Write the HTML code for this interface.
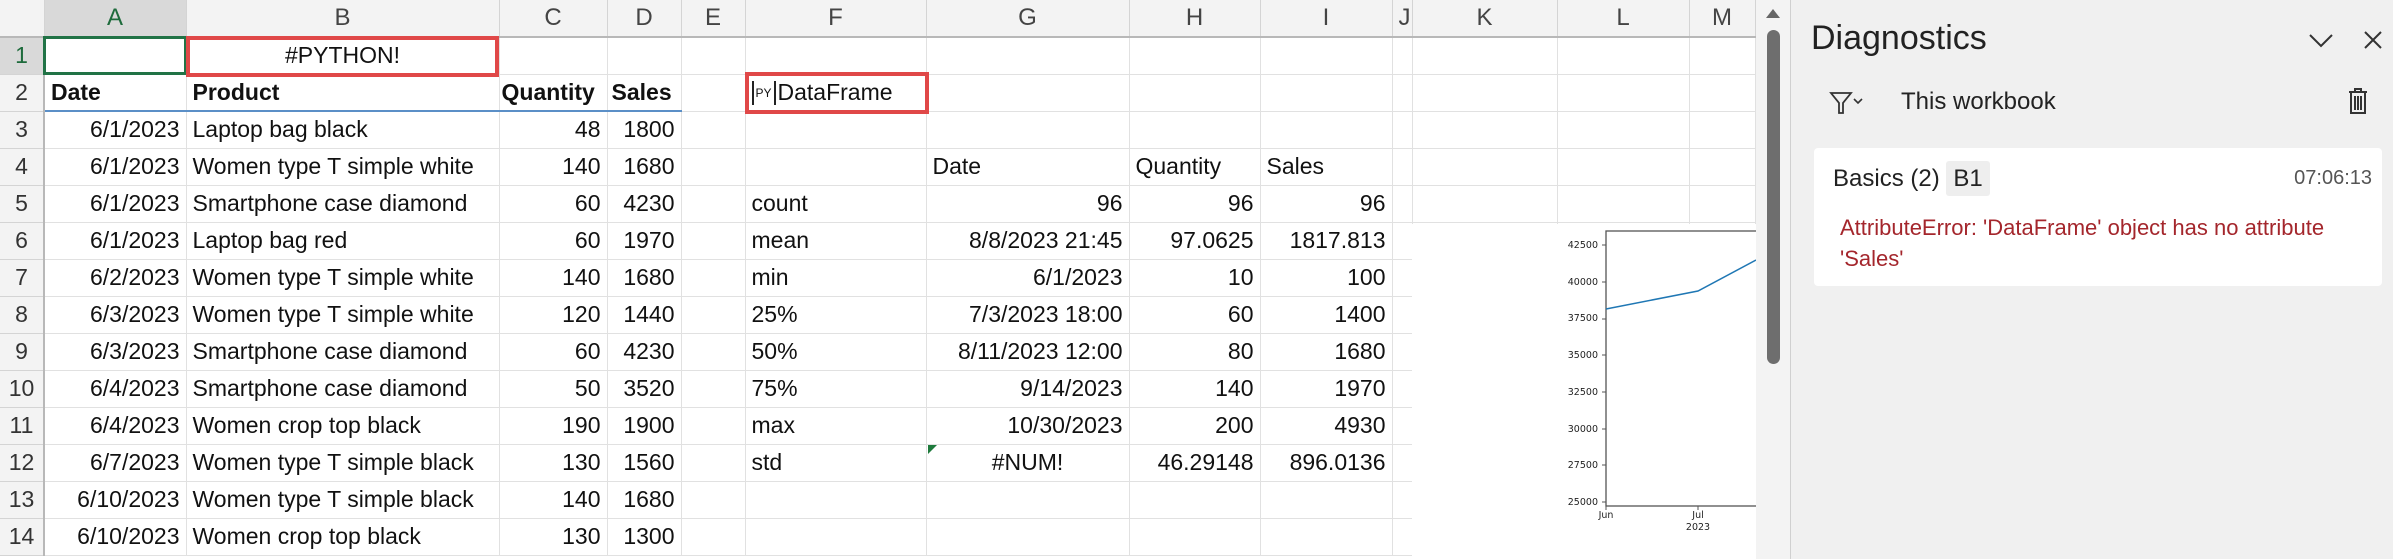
<!DOCTYPE html>
<html><head><meta charset="utf-8"><style>
*{margin:0;padding:0;box-sizing:border-box}
body{width:2393px;height:559px;overflow:hidden;background:#fff;font-family:"Liberation Sans",sans-serif;position:relative}
table{position:absolute;left:0;top:0;border-collapse:collapse;table-layout:fixed;width:1755px}
td,th{height:37px;border-right:1px solid #e1e1e1;border-bottom:1px solid #e1e1e1;font-size:23px;color:#111;white-space:nowrap;overflow:visible;padding:0 6px;font-weight:normal}
thead th{background:#f3f3f3;color:#444;font-size:24px;text-align:center;border-bottom:2px solid #b8b8b8;border-right:1px solid #d4d4d4}
tbody th{background:#f3f3f3;color:#333;text-align:center;padding:0;border-right:2px solid #b8b8b8;border-bottom:1px solid #d4d4d4}
.r{text-align:right}
.b{font-weight:bold}
.bl td{border-bottom:2px solid #5b8fc7}
.box{position:absolute;border:4px solid #e04848}
.panel{position:absolute;left:1790px;top:0;width:603px;height:559px;background:#f0f0f0;border-left:1px solid #d0d0d0}
</style></head><body>
<table>
<colgroup><col style="width:44px"><col style="width:142px"><col style="width:313px"><col style="width:108px"><col style="width:74px"><col style="width:64px"><col style="width:181px"><col style="width:203px"><col style="width:131px"><col style="width:132px"><col style="width:20px"><col style="width:145px"><col style="width:132px"><col style="width:66px"></colgroup>
<thead><tr><th></th><th style="background:#d9d9d9;color:#1e6b3c;border-bottom:3px solid #217346">A</th><th>B</th><th>C</th><th>D</th><th>E</th><th>F</th><th>G</th><th>H</th><th>I</th><th>J</th><th>K</th><th>L</th><th>M</th></tr></thead>
<tbody>
<tr><th style="background:#d9d9d9;color:#1e6b3c">1</th><td style="outline:3px solid #217346;outline-offset:-2px"></td><td style="text-align:center">#PYTHON!</td><td></td><td></td><td></td><td></td><td></td><td></td><td></td><td></td><td></td><td></td><td></td></tr>
<tr class="bl"><th>2</th><td class="b">Date</td><td class="b">Product</td><td class="b" style="padding:0 2px">Quantity</td><td class="b" style="padding:0 4px">Sales</td><td style="border-bottom:1px solid #e1e1e1"></td><td style="border-bottom:1px solid #e1e1e1"><div style="display:flex;align-items:center;height:36px"><span style="display:inline-block;font-size:12px;border:2px solid #222;border-top:0;border-bottom:0;padding:0 2px;height:24px;line-height:24px;margin-right:2px">PY</span><span>DataFrame</span></div></td><td style="border-bottom:1px solid #e1e1e1"></td><td style="border-bottom:1px solid #e1e1e1"></td><td style="border-bottom:1px solid #e1e1e1"></td><td style="border-bottom:1px solid #e1e1e1"></td><td style="border-bottom:1px solid #e1e1e1"></td><td style="border-bottom:1px solid #e1e1e1"></td><td style="border-bottom:1px solid #e1e1e1"></td></tr>
<tr><th>3</th><td class="r">6/1/2023</td><td>Laptop bag black</td><td class="r">48</td><td class="r">1800</td><td></td><td></td><td></td><td></td><td></td><td></td><td></td><td></td><td></td></tr>
<tr><th>4</th><td class="r">6/1/2023</td><td>Women type T simple white</td><td class="r">140</td><td class="r">1680</td><td></td><td></td><td>Date</td><td>Quantity</td><td>Sales</td><td></td><td></td><td></td><td></td></tr>
<tr><th>5</th><td class="r">6/1/2023</td><td>Smartphone case diamond</td><td class="r">60</td><td class="r">4230</td><td></td><td>count</td><td class="r">96</td><td class="r">96</td><td class="r">96</td><td></td><td></td><td></td><td></td></tr>
<tr><th>6</th><td class="r">6/1/2023</td><td>Laptop bag red</td><td class="r">60</td><td class="r">1970</td><td></td><td>mean</td><td class="r">8/8/2023 21:45</td><td class="r">97.0625</td><td class="r">1817.813</td><td></td><td></td><td></td><td></td></tr>
<tr><th>7</th><td class="r">6/2/2023</td><td>Women type T simple white</td><td class="r">140</td><td class="r">1680</td><td></td><td>min</td><td class="r">6/1/2023</td><td class="r">10</td><td class="r">100</td><td></td><td></td><td></td><td></td></tr>
<tr><th>8</th><td class="r">6/3/2023</td><td>Women type T simple white</td><td class="r">120</td><td class="r">1440</td><td></td><td>25%</td><td class="r">7/3/2023 18:00</td><td class="r">60</td><td class="r">1400</td><td></td><td></td><td></td><td></td></tr>
<tr><th>9</th><td class="r">6/3/2023</td><td>Smartphone case diamond</td><td class="r">60</td><td class="r">4230</td><td></td><td>50%</td><td class="r">8/11/2023 12:00</td><td class="r">80</td><td class="r">1680</td><td></td><td></td><td></td><td></td></tr>
<tr><th>10</th><td class="r">6/4/2023</td><td>Smartphone case diamond</td><td class="r">50</td><td class="r">3520</td><td></td><td>75%</td><td class="r">9/14/2023</td><td class="r">140</td><td class="r">1970</td><td></td><td></td><td></td><td></td></tr>
<tr><th>11</th><td class="r">6/4/2023</td><td>Women crop top black</td><td class="r">190</td><td class="r">1900</td><td></td><td>max</td><td class="r">10/30/2023</td><td class="r">200</td><td class="r">4930</td><td></td><td></td><td></td><td></td></tr>
<tr><th>12</th><td class="r">6/7/2023</td><td>Women type T simple black</td><td class="r">130</td><td class="r">1560</td><td></td><td>std</td><td style="text-align:center">#NUM!</td><td class="r">46.29148</td><td class="r">896.0136</td><td></td><td></td><td></td><td></td></tr>
<tr><th>13</th><td class="r">6/10/2023</td><td>Women type T simple black</td><td class="r">140</td><td class="r">1680</td><td></td><td></td><td></td><td></td><td></td><td></td><td></td><td></td><td></td></tr>
<tr><th>14</th><td class="r">6/10/2023</td><td>Women crop top black</td><td class="r">130</td><td class="r">1300</td><td></td><td></td><td></td><td></td><td></td><td></td><td></td><td></td><td></td></tr>
</tbody></table>
<div class="box" style="left:186px;top:36px;width:313px;height:41px"></div>
<div class="box" style="left:745px;top:72px;width:184px;height:42px"></div>
<div style="position:absolute;left:928px;top:445px;width:0;height:0;border-top:9px solid #1e7a3c;border-right:9px solid transparent"></div>
<svg style="position:absolute;left:1412px;top:224px" width="344" height="332" font-family="DejaVu Sans,sans-serif" font-size="9.5" fill="#222">
<rect width="344" height="332" fill="#fff"/>
<rect x="194" y="7" width="160" height="275" fill="none" stroke="#555" stroke-width="1.3"/>
<g text-anchor="end">
<text x="186" y="24">42500</text><text x="186" y="61">40000</text><text x="186" y="97">37500</text><text x="186" y="134">35000</text><text x="186" y="171">32500</text><text x="186" y="208">30000</text><text x="186" y="244">27500</text><text x="186" y="281">25000</text></g>
<g stroke="#555"><path d="M190 21h4M190 58h4M190 95h4M190 131h4M190 168h4M190 205h4M190 241h4M190 278h4M194 282v4M286 282v4"/></g>
<g text-anchor="middle"><text x="194" y="294">Jun</text><text x="286" y="294">Jul</text><text x="286" y="306">2023</text></g>
<polyline points="194,85 286,67 344,36" fill="none" stroke="#1f77b4" stroke-width="1.5"/>
</svg>
<div style="position:absolute;left:1756px;top:0;width:34px;height:559px;background:#f3f3f3"></div>
<div style="position:absolute;left:1766px;top:9px;width:0;height:0;border-left:7px solid transparent;border-right:7px solid transparent;border-bottom:9px solid #666"></div>
<div style="position:absolute;left:1767px;top:30px;width:13px;height:334px;background:#6e6e6e;border-radius:7px"></div>
<div class="panel">
<div style="position:absolute;left:20px;top:19px;font-size:34px;color:#222">Diagnostics</div>
<svg style="position:absolute;left:517px;top:32px" width="26" height="16"><path d="M2 3l11 11 11-11" fill="none" stroke="#333" stroke-width="2"/></svg>
<svg style="position:absolute;left:572px;top:30px" width="20" height="20"><path d="M2 2l16 16M18 2L2 18" stroke="#333" stroke-width="2"/></svg>
<svg style="position:absolute;left:38px;top:90px" width="36" height="26"><path d="M2 3h20l-8 10v10h-4V13z" fill="none" stroke="#333" stroke-width="1.8"/><path d="M25 9l4 4 4-4" fill="none" stroke="#333" stroke-width="1.6"/></svg>
<div style="position:absolute;left:110px;top:88px;font-size:24px;color:#222">This workbook</div>
<svg style="position:absolute;left:555px;top:86px" width="24" height="30"><path d="M3 6h18M9 6V3h6v3M5 6v21h14V6M9 10v14M12 10v14M15 10v14" fill="none" stroke="#333" stroke-width="2"/></svg>
<div style="position:absolute;left:23px;top:148px;width:568px;height:138px;background:#fff;border-radius:4px">
<div style="position:absolute;left:19px;top:17px;font-size:24px;color:#222">Basics (2) <span style="background:#eeeeee;padding:4px 7px;border-radius:3px">B1</span></div>
<div style="position:absolute;right:10px;top:19px;font-size:20px;color:#555">07:06:13</div>
<div style="position:absolute;left:26px;top:64px;width:510px;font-size:22px;line-height:31px;color:#a4262c">AttributeError: 'DataFrame' object has no attribute 'Sales'</div>
</div>
</div>
</body></html>
